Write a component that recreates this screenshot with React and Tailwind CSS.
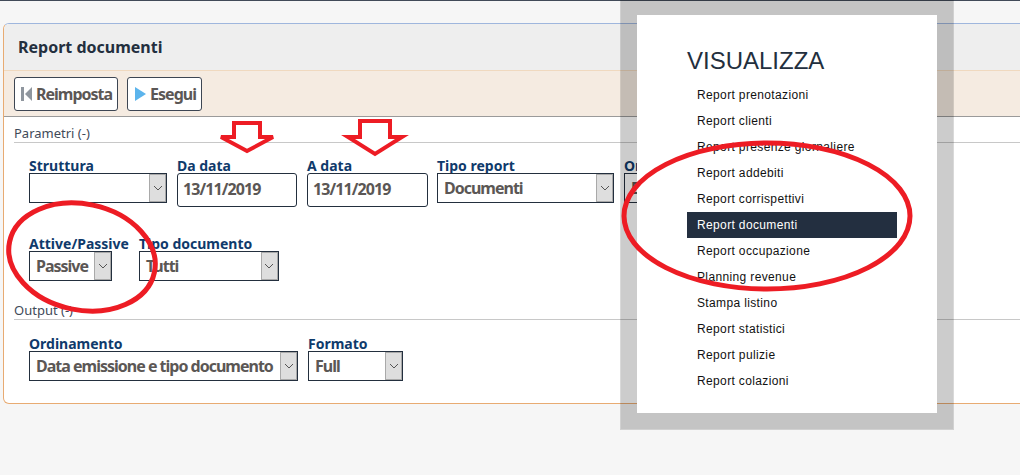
import React from "react";

const font = { fontFamily: '"Noto Sans", "Open Sans", sans-serif' };

function Chevron() {
  return (
    <svg width="10" height="6" viewBox="0 0 10 6" fill="none" stroke="#555" strokeWidth="1">
      <path d="M1 1l4 4 4-4" />
    </svg>
  );
}

function Select({ value, className = "" }) {
  return (
    <div className={`h-[30px] border border-[#232f3e] bg-white flex items-stretch ${className}`}>
      <span className="flex-1 pl-[6px] pt-[1px] leading-[27px] text-[16px] font-bold tracking-[-1px] text-[#5b5755] whitespace-nowrap">
        {value}
      </span>
      <span className="w-[17px] border border-[#a9a9a9] bg-[#dedede] flex items-center justify-center">
        <Chevron />
      </span>
    </div>
  );
}

function Field({ label, children, className = "" }) {
  return (
    <div className={`flex flex-col shrink-0 ${className}`}>
      <span className="text-[14px] leading-[15px] font-bold text-[#0f3a6b] whitespace-nowrap">{label}</span>
      {children}
    </div>
  );
}

function DateInput({ value, className = "" }) {
  return (
    <div className={`h-[34px] border border-[#232f3e] rounded-[3px] bg-white pl-[5px] leading-[31px] text-[16px] font-bold tracking-[-0.9px] text-[#5b5755] ${className}`}>
      {value}
    </div>
  );
}

function ToolButton({ icon, label }) {
  return (
    <button className="h-[34px] pl-[6px] pr-[5px] border border-[#3d4653] rounded-[3px] bg-white flex items-center gap-[4px] text-[16px] font-bold tracking-[-1px] text-[#5b5755]">
      {icon}
      {label}
    </button>
  );
}

function Section({ title }) {
  return (
    <div className="border-b border-[#c8c8c8] h-[18px] pt-[1px] text-[13px] leading-[14px] text-[#3f4a59]">{title}</div>
  );
}

const items = [
  "Report prenotazioni",
  "Report clienti",
  "Report presenze giornaliere",
  "Report addebiti",
  "Report corrispettivi",
  "Report documenti",
  "Report occupazione",
  "Planning revenue",
  "Stampa listino",
  "Report statistici",
  "Report pulizie",
  "Report colazioni",
];

export default function App() {
  return (
    <div className="relative w-[1020px] h-[475px] overflow-hidden bg-[#f6f6f6]" style={font}>
      <div className="h-[1px] bg-[#414a58]" />
      <div className="ml-[3px] mt-[22px] w-[1100px] h-[381px] border border-[#e8ab72] border-t-[#9fb6dd] rounded-[6px] bg-white overflow-hidden">
        <div className="h-[47px] bg-[#eeeeee] border-b border-[#f0d9bf] pl-[14px] flex items-center text-[16px] font-bold text-[#232f3e]">
          Report documenti
        </div>
        <div className="h-[46px] bg-[#f5ebe1] border-b border-[#9a9a9a] pl-[10px] pt-[6px] flex items-start gap-[9px]">
          <ToolButton
            label="Reimposta"
            icon={
              <svg width="11" height="16" viewBox="0 0 11 16" fill="#8f969e">
                <rect x="0" y="1" width="3" height="14" />
                <path d="M11 1v14L4 8z" />
              </svg>
            }
          />
          <ToolButton
            label="Esegui"
            icon={
              <svg width="12" height="16" viewBox="0 0 12 16" fill="#5cb4ec">
                <path d="M1 1v14l11-7z" />
              </svg>
            }
          />
        </div>
        <div className="pl-[10px] pt-[8px]">
          <Section title="Parametri (-)" />
          <div className="pl-[15px] pt-[15px] flex gap-[10px] items-start">
            <Field label="Struttura" className="w-[138px]">
              <Select value="" className="w-[138px]" />
            </Field>
            <Field label="Da data">
              <DateInput value="13/11/2019" className="w-[120px]" />
            </Field>
            <Field label="A data" className="mr-[-1px]">
              <DateInput value="13/11/2019" className="w-[121px]" />
            </Field>
            <Field label="Tipo report">
              <Select value="Documenti" className="w-[177px]" />
            </Field>
            <Field label="Ordine">
              <Select value="Data" className="w-[177px]" />
            </Field>
          </div>
          <div className="pl-[15px] pt-[29px] flex gap-[10px] items-start">
            <Field label="Attive/Passive">
              <Select value="Passive" className="w-[83px]" />
            </Field>
            <Field label="Tipo documento">
              <Select value="Tutti" className="w-[140px]" />
            </Field>
          </div>
          <div className="mt-[21px]">
            <Section title="Output (-)" />
          </div>
          <div className="pl-[15px] pt-[16px] flex gap-[10px] items-start">
            <Field label="Ordinamento">
              <Select value="Data emissione e tipo documento" className="w-[269px]" />
            </Field>
            <Field label="Formato">
              <Select value="Full" className="w-[95px]" />
            </Field>
          </div>
        </div>
      </div>

      {/* Pasted menu with its translucent frame */}
      <div className="absolute left-[620px] top-0 w-[334px] h-[430px] bg-black/20 bg-clip-padding border border-black/15 border-t-0 pt-[15px] pl-[16px]">
        <div
          className="w-[300px] h-[398px] bg-white pl-[50px] pt-[31px]"
          style={{ fontFamily: '"Liberation Sans", Arial, sans-serif' }}
        >
          <div className="text-[24px] leading-[30px] text-[#232f3e]">VISUALIZZA</div>
          <ul className="mt-[6px] w-[210px]">
            {items.map((t) => (
              <li
                key={t}
                className={`h-[26px] pl-[10px] leading-[26px] text-[12px] tracking-[0.36px] ${
                  t === "Report documenti" ? "bg-[#232f40] text-white" : "text-[#111111]"
                }`}
              >
                {t}
              </li>
            ))}
          </ul>
        </div>
      </div>

      {/* Red hand-drawn annotations */}
      <svg className="absolute left-0 top-0 pointer-events-none" width="1020" height="475" viewBox="0 0 1020 475" fill="none">
        <ellipse cx="82" cy="257" rx="74" ry="53" stroke="#ed1c24" strokeWidth="5" transform="rotate(12 82 257)" />
        <ellipse cx="767" cy="216" rx="143" ry="73" stroke="#ed1c24" strokeWidth="5" />
        <path d="M234 123h26v14h13l-26 14-26-14h13z" fill="white" stroke="#ed1c24" strokeWidth="4" />
        <path d="M360 121h30v16h12l-27 17-27-17h12z" fill="white" stroke="#ed1c24" strokeWidth="4" />
      </svg>
    </div>
  );
}
